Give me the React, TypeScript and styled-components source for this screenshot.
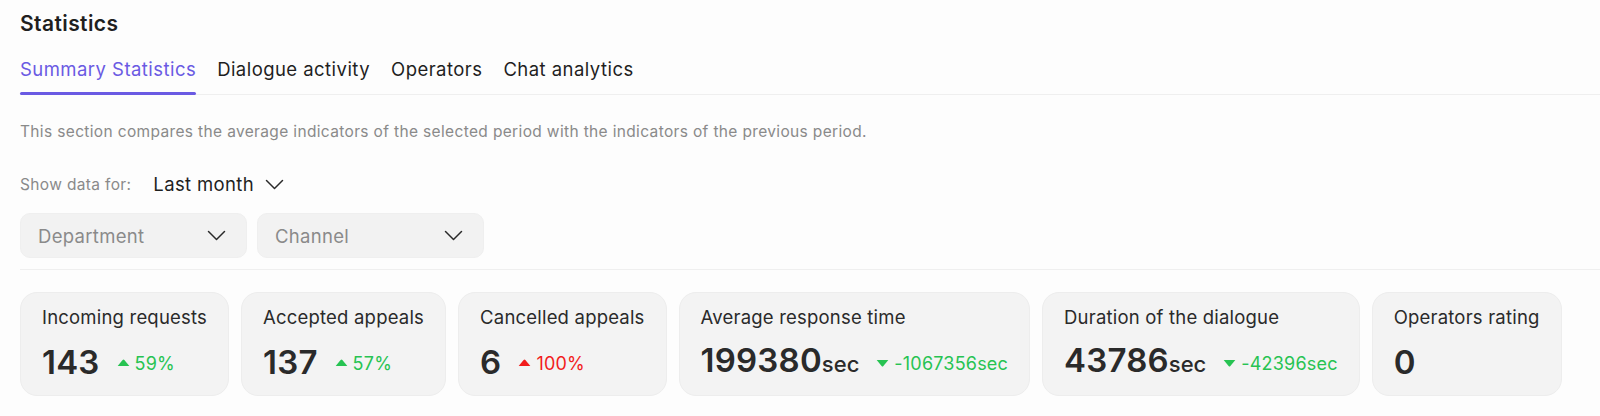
import React from 'react';
import styled, { createGlobalStyle } from 'styled-components';

const GlobalStyle = createGlobalStyle`
  body {
    margin: 0;
    background: #fdfdfd;
    font-family: Inter, "Noto Sans", sans-serif;
    color: #222;
  }
`;

// --- Styled Components ---
const Page = styled.div`
  padding: 9px 0 20px 20px;
`;

const Title = styled.h1`
  margin: 0;
  font-size: 21px;
  font-weight: 600;
  letter-spacing: 0.4px;
  line-height: 29px;
  color: #1f1f1f;
`;

const Tabs = styled.div`
  display: flex;
  gap: 21px;
  margin-top: 18px;
  border-bottom: 1px solid #efefef;
`;

const Tab = styled.div<{ $active?: boolean }>`
  position: relative;
  font-size: 18.5px;
  letter-spacing: 0.45px;
  line-height: 26px;
  padding-bottom: 12px;
  color: ${({ $active }) => ($active ? '#6a5ae3' : '#1f1f1f')};

  &::after {
    content: '';
    display: ${({ $active }) => ($active ? 'block' : 'none')};
    position: absolute;
    left: 0;
    right: 0;
    bottom: -1px;
    height: 3px;
    border-radius: 2px;
    background: #6a5ae3;
  }
`;

const Description = styled.p`
  margin: 26px 0 0;
  font-size: 15.5px;
  letter-spacing: 0.35px;
  line-height: 22px;
  color: #8a8a8a;
`;

const PeriodRow = styled.div`
  display: flex;
  align-items: center;
  gap: 22px;
  margin-top: 28px;
  height: 26px;
`;

const PeriodLabel = styled.span`
  font-size: 15.5px;
  letter-spacing: 0.35px;
  color: #8a8a8a;
`;

const PeriodSelect = styled.button`
  display: inline-flex;
  align-items: center;
  gap: 11px;
  border: none;
  background: none;
  padding: 0;
  font-family: inherit;
  font-size: 18.5px;
  letter-spacing: 0.35px;
  color: #1f1f1f;
  cursor: pointer;
`;

const Filters = styled.div`
  display: flex;
  gap: 10px;
  margin-top: 16px;
  padding-bottom: 11px;
  border-bottom: 1px solid #efefef;
`;

const Select = styled.button`
  display: flex;
  align-items: center;
  justify-content: space-between;
  width: 227px;
  height: 45px;
  padding: 0 20px 0 17px;
  box-sizing: border-box;
  border: 1px solid #efefef;
  border-radius: 10px;
  background: #f2f2f2;
  font-family: inherit;
  font-size: 18.5px;
  letter-spacing: 0.3px;
  color: #8a8a8a;
  cursor: pointer;
`;

const Cards = styled.div`
  display: flex;
  gap: 12px;
  margin-top: 22px;
`;

const Card = styled.div`
  padding: 11px 21px 0;
  height: 104px;
  box-sizing: border-box;
  border: 1px solid #ededed;
  border-radius: 17px;
  background: #f3f3f3;
`;

const CardTitle = styled.div`
  font-size: 18.5px;
  letter-spacing: 0.2px;
  line-height: 26px;
  color: #2a2a2a;
  white-space: nowrap;
`;

const ValueRow = styled.div`
  display: flex;
  align-items: center;
  gap: 17px;
  margin-top: 13px;
  height: 38px;
`;

const Value = styled.div`
  font-size: 33px;
  font-weight: 600;
  letter-spacing: 0.2px;
  line-height: 38px;
  color: #2a2a2a;
  white-space: nowrap;
`;

const Unit = styled.span`
  font-size: 22px;
  font-weight: 500;
  letter-spacing: 0;
`;

const Delta = styled.div<{ $color: string }>`
  display: flex;
  align-items: center;
  gap: 5px;
  font-size: 18px;
  letter-spacing: 0.2px;
  color: ${({ $color }) => $color};
  white-space: nowrap;
  padding-top: 2px;
`;

const Chevron = () => (
  <svg width="19" height="11" viewBox="0 0 19 11" fill="none">
    <path d="M1.5 1.5l8 8 8-8" stroke="#2a2a2a" strokeWidth="1.5" strokeLinecap="round" strokeLinejoin="round" />
  </svg>
);

const Triangle = ({ up, color }: { up: boolean; color: string }) => (
  <svg width="13" height="8" viewBox="0 0 13 8">
    {up ? (
      <path d="M5.6 1.1a1.2 1.2 0 0 1 1.8 0L12.3 7H0.7z" fill={color} />
    ) : (
      <path d="M5.6 6.9a1.2 1.2 0 0 0 1.8 0L12.3 1H0.7z" fill={color} />
    )}
  </svg>
);

type Stat = {
  title: string;
  value: string;
  unit?: string;
  delta?: string;
  up?: boolean;
  color?: string;
};

const GREEN = '#27c352';
const RED = '#f21c1c';

const stats: Stat[] = [
  { title: 'Incoming requests', value: '143', delta: '59%', up: true, color: GREEN },
  { title: 'Accepted appeals', value: '137', delta: '57%', up: true, color: GREEN },
  { title: 'Cancelled appeals', value: '6', delta: '100%', up: true, color: RED },
  { title: 'Average response time', value: '199380', unit: 'sec', delta: '-1067356sec', up: false, color: GREEN },
  { title: 'Duration of the dialogue', value: '43786', unit: 'sec', delta: '-42396sec', up: false, color: GREEN },
  { title: 'Operators rating', value: '0' },
];

const tabs = ['Summary Statistics', 'Dialogue activity', 'Operators', 'Chat analytics'];

export default function App() {
  return (
    <>
      <GlobalStyle />
      <Page>
        <Title>Statistics</Title>
        <Tabs>
          {tabs.map((t, i) => (
            <Tab key={t} $active={i === 0}>{t}</Tab>
          ))}
        </Tabs>
        <Description>
          This section compares the average indicators of the selected period with the indicators of the previous period.
        </Description>
        <PeriodRow>
          <PeriodLabel>Show data for:</PeriodLabel>
          <PeriodSelect>
            Last month <Chevron />
          </PeriodSelect>
        </PeriodRow>
        <Filters>
          <Select>
            Department <Chevron />
          </Select>
          <Select>
            Channel <Chevron />
          </Select>
        </Filters>
        <Cards>
          {stats.map((s) => (
            <Card key={s.title}>
              <CardTitle>{s.title}</CardTitle>
              <ValueRow>
                <Value>
                  {s.value}
                  {s.unit && <Unit>{s.unit}</Unit>}
                </Value>
                {s.delta && (
                  <Delta $color={s.color!}>
                    <Triangle up={!!s.up} color={s.color!} />
                    {s.delta}
                  </Delta>
                )}
              </ValueRow>
            </Card>
          ))}
        </Cards>
      </Page>
    </>
  );
}
